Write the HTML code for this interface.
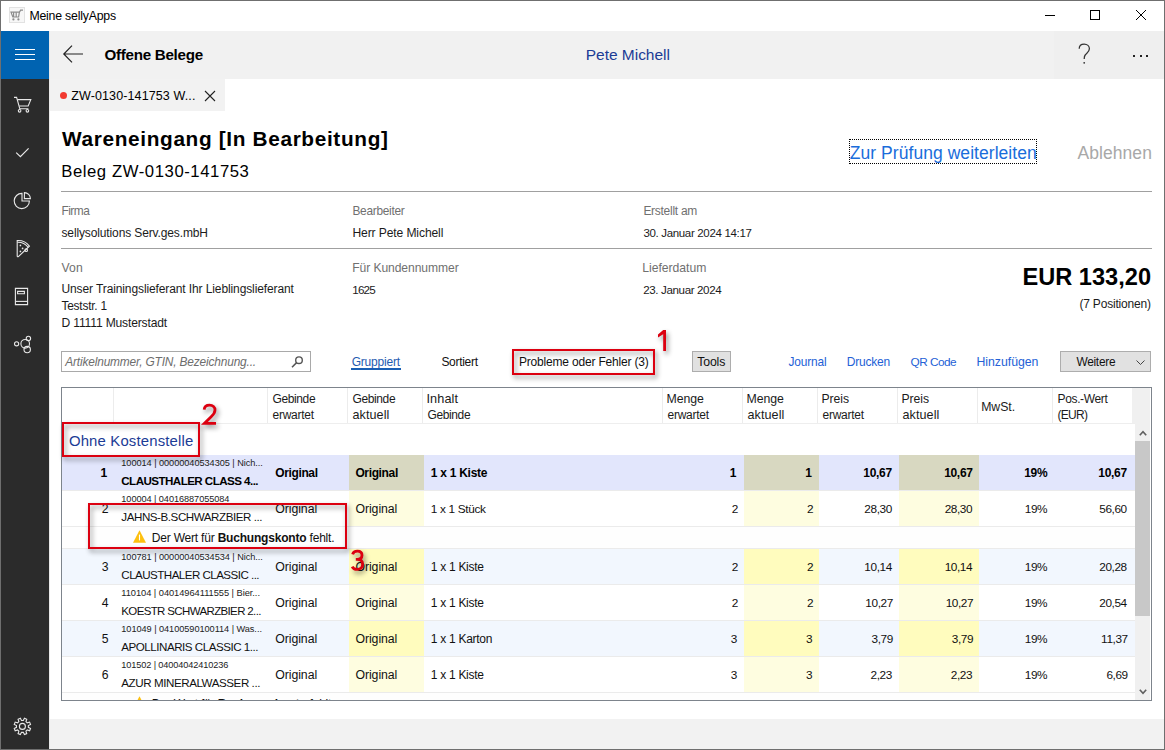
<!DOCTYPE html>
<html><head><meta charset="utf-8">
<style>
*{margin:0;padding:0;box-sizing:border-box}
html,body{width:1165px;height:750px;overflow:hidden;background:#fff}
body{position:relative;font-family:"Liberation Sans",sans-serif;color:#1b1b1b}
.a{position:absolute}
.t{position:absolute;white-space:nowrap;line-height:1}
svg{position:absolute;overflow:visible}
</style></head><body>
<!-- window border -->
<div class="a" style="left:0;top:0;width:1165px;height:750px;border:1px solid #6f6f6f"></div>
<!-- title bar icon -->
<div class="a" style="left:9px;top:7px;width:16px;height:16px;background:#f7f7f7;border:1px solid #e2e2e2"></div>
<svg style="left:9px;top:7px" width="16" height="16"><g fill="none" stroke="#8c8c8c" stroke-width="1.2"><path d="M2,5.2 H10.4 L9.6,10 H3.8 Z"/><path d="M10.4,5.2 L11.6,3.2 H14"/><path d="M4.6,5.2 V10 M7.2,5.2 V10"/></g><g fill="#8c8c8c"><circle cx="4.4" cy="12.4" r="1.1"/><circle cx="9.4" cy="12.4" r="1.1"/></g></svg>
<div class="a" style="left:1045px;top:15px;width:10px;height:1px;background:#000"></div>
<div class="a" style="left:1090px;top:10px;width:10px;height:10px;border:1px solid #000"></div>
<svg style="left:1136px;top:10px" width="10" height="10"><path d="M0,0 L10,10 M10,0 L0,10" stroke="#000" stroke-width="1"/></svg>
<!-- sidebar -->
<div class="a" style="left:1px;top:31px;width:48px;height:718px;background:#2b2b2b"></div>
<div class="a" style="left:1px;top:31px;width:48px;height:48px;background:#0063b1"></div>
<div class="a" style="left:15px;top:49px;width:20px;height:1px;background:#fff"></div>
<div class="a" style="left:15px;top:54px;width:20px;height:1px;background:#fff"></div>
<div class="a" style="left:15px;top:59px;width:20px;height:1px;background:#fff"></div>
<div class="a" style="left:49px;top:31px;width:1px;height:718px;background:#e8e8e8"></div>
<svg style="left:8px;top:90px" width="30" height="30"><g fill="none" stroke="#e8e8e8" stroke-width="1.1"><path d="M6,7.4 H8.6 L11.8,18.8 H20.4"/><path d="M9.4,9.6 H22.8 L20.2,16 H11.2"/><circle cx="11.6" cy="20.8" r="1.3"/><circle cx="19.4" cy="20.8" r="1.3"/></g></svg>
<svg style="left:8px;top:138px" width="30" height="30"><path d="M8.2,14.6 L12.4,18.6 L20.6,10.4" fill="none" stroke="#e8e8e8" stroke-width="1.2"/></svg>
<svg style="left:8px;top:186px" width="30" height="30"><g fill="none" stroke="#e8e8e8" stroke-width="1.1"><path d="M14,7.4 A7.6,7.6 0 1 0 21.4,15 H14 Z"/><path d="M16.4,6.6 V12.6 H22.4 A6,6 0 0 0 16.4,6.6 Z"/></g></svg>
<svg style="left:8px;top:234px" width="30" height="30"><g fill="none" stroke="#e8e8e8" stroke-width="1.1"><path d="M9.2,6.6 C14,6.2 18.4,8.4 21.4,12.2 L10.4,22.6 C9.8,23 9.2,22.6 9.2,22 Z"/><path d="M9.4,8.2 C13.6,8 17.6,10 20.2,13.4"/><circle cx="18.2" cy="16.2" r="1.3"/></g><g fill="#e8e8e8"><circle cx="12.4" cy="11.4" r="0.85"/><circle cx="14.6" cy="14.4" r="0.85"/><circle cx="12.4" cy="17.4" r="0.85"/></g></svg>
<svg style="left:8px;top:282px" width="30" height="30"><g fill="none" stroke="#e8e8e8" stroke-width="1.1"><path d="M7.4,6.4 H19.6 V22.6 H7.4 Z"/><path d="M7.4,19.4 H19.6"/><path d="M9.6,9.4 H16.4 V11.8 H9.6 Z"/></g></svg>
<svg style="left:8px;top:330px" width="30" height="30"><g fill="none" stroke="#e8e8e8" stroke-width="1.1"><circle cx="8.6" cy="13.8" r="2.1"/><circle cx="17.2" cy="13.8" r="4.3"/><circle cx="20.4" cy="8.4" r="2.2"/><circle cx="19.2" cy="19.6" r="3.2"/></g></svg>
<svg style="left:8px;top:711px" width="30" height="30"><g fill="none" stroke="#e8e8e8" stroke-width="1.1"><path d="M22.55,17.43 L21.60,19.73 L19.23,18.96 L17.96,20.23 L18.73,22.60 L16.43,23.55 L15.29,21.33 L13.51,21.33 L12.37,23.55 L10.07,22.60 L10.84,20.23 L9.57,18.96 L7.20,19.73 L6.25,17.43 L8.47,16.29 L8.47,14.51 L6.25,13.37 L7.20,11.07 L9.57,11.84 L10.84,10.57 L10.07,8.20 L12.37,7.25 L13.51,9.47 L15.29,9.47 L16.43,7.25 L18.73,8.20 L17.96,10.57 L19.23,11.84 L21.60,11.07 L22.55,13.37 L20.33,14.51 L20.33,16.29 Z"/><circle cx="14.4" cy="15.4" r="3"/></g></svg>
<!-- app header -->
<div class="a" style="left:50px;top:31px;width:1114px;height:48px;background:#f1f1f1"></div>
<div class="a" style="left:1054px;top:31px;width:110px;height:48px;background:#efefef"></div>
<svg style="left:63px;top:45px" width="20" height="18"><path d="M9,0.6 L0.8,9 L9,17.4 M0.8,9 H20" fill="none" stroke="#222" stroke-width="1.2"/></svg>
<svg style="left:1078px;top:43px" width="13" height="21"><path d="M1.2,5.8 C1.2,2.8 3.4,1 6.2,1 C9.2,1 11.4,3 11.4,5.8 C11.4,8.8 8.6,10.2 7.2,12 C6.4,13 6.2,14 6.2,16" fill="none" stroke="#333" stroke-width="1.25"/><circle cx="6.2" cy="19.8" r="0.9" fill="#333"/></svg>
<div class="a" style="left:1133px;top:55px;width:2px;height:2px;background:#222"></div>
<div class="a" style="left:1140px;top:55px;width:2px;height:2px;background:#222"></div>
<div class="a" style="left:1146px;top:55px;width:2px;height:2px;background:#222"></div>
<!-- tab -->
<div class="a" style="left:50px;top:79px;width:175px;height:32px;background:#f2f2f2"></div>
<div class="a" style="left:60px;top:92px;width:7px;height:7px;border-radius:50%;background:#f23a30"></div>
<svg style="left:205px;top:91px" width="10" height="10"><path d="M0,0 L10,10 M10,0 L0,10" stroke="#222" stroke-width="1.1"/></svg>
<!-- main -->
<div class="a" style="left:849px;top:139px;width:188px;height:25px;border:1px dotted #000"></div>
<div class="a" style="left:61px;top:191px;width:1091px;height:1px;background:#a0a0a0"></div>
<div class="a" style="left:61px;top:248px;width:1091px;height:1px;background:#a0a0a0"></div>
<!-- toolbar -->
<div class="a" style="left:61px;top:351px;width:250px;height:21px;border:1px solid #a9a9a9;background:#fff"></div>
<svg style="left:291px;top:356px" width="13" height="12"><circle cx="8" cy="4.2" r="3.3" fill="none" stroke="#555" stroke-width="1.4"/><path d="M5.6,6.6 L1,11.2" stroke="#555" stroke-width="1.5"/></svg>
<div class="a" style="left:351px;top:368px;width:50px;height:2px;background:#1a5fb4"></div>
<div class="a" style="left:692px;top:351px;width:39px;height:21px;border:1px solid #adadad;background:#e1e1e1"></div>
<div class="a" style="left:1060px;top:351px;width:91px;height:21px;border:1px solid #adadad;background:#e1e1e1"></div>
<svg style="left:1136px;top:359.5px" width="9" height="6"><path d="M0.5,0.5 L4.5,4.5 L8.5,0.5" fill="none" stroke="#444" stroke-width="1"/></svg>
<!-- bottom bar -->
<div class="a" style="left:50px;top:719px;width:1114px;height:30px;background:#f2f2f2"></div>

<div class="a" style="left:113px;top:388px;width:1px;height:35px;background:#ececec"></div>
<div class="a" style="left:267px;top:388px;width:1px;height:35px;background:#ececec"></div>
<div class="a" style="left:347px;top:388px;width:1px;height:35px;background:#ececec"></div>
<div class="a" style="left:422px;top:388px;width:1px;height:35px;background:#ececec"></div>
<div class="a" style="left:662px;top:388px;width:1px;height:35px;background:#ececec"></div>
<div class="a" style="left:742px;top:388px;width:1px;height:35px;background:#ececec"></div>
<div class="a" style="left:817px;top:388px;width:1px;height:35px;background:#ececec"></div>
<div class="a" style="left:897px;top:388px;width:1px;height:35px;background:#ececec"></div>
<div class="a" style="left:977px;top:388px;width:1px;height:35px;background:#ececec"></div>
<div class="a" style="left:1052px;top:388px;width:1px;height:35px;background:#ececec"></div>
<div class="a" style="left:1132px;top:388px;width:18px;height:35px;background:#f0f0f0"></div>
<div class="a" style="left:62px;top:423px;width:1073px;height:1px;background:#eeeeee"></div>
<div class="a" style="left:62px;top:455px;width:1073px;height:35px;background:#e2e6fc"></div>
<div class="a" style="left:349px;top:455px;width:75px;height:35px;background:#d8d8c1"></div>
<div class="a" style="left:744px;top:455px;width:75px;height:35px;background:#d8d8c1"></div>
<div class="a" style="left:899px;top:455px;width:80px;height:35px;background:#d8d8c1"></div>
<div class="a" style="left:62px;top:490px;width:1073px;height:1px;background:#ebebeb"></div>
<div class="a" style="left:62px;top:491px;width:1073px;height:35px;background:#ffffff"></div>
<div class="a" style="left:349px;top:491px;width:75px;height:35px;background:#fefde0"></div>
<div class="a" style="left:744px;top:491px;width:75px;height:35px;background:#fefde0"></div>
<div class="a" style="left:899px;top:491px;width:80px;height:35px;background:#fefde0"></div>
<div class="a" style="left:62px;top:526px;width:1073px;height:1px;background:#ebebeb"></div>
<div class="a" style="left:62px;top:549px;width:1073px;height:35px;background:#f2f7fe"></div>
<div class="a" style="left:349px;top:549px;width:75px;height:35px;background:#fffcbe"></div>
<div class="a" style="left:744px;top:549px;width:75px;height:35px;background:#fffcbe"></div>
<div class="a" style="left:899px;top:549px;width:80px;height:35px;background:#fffcbe"></div>
<div class="a" style="left:62px;top:584px;width:1073px;height:1px;background:#ebebeb"></div>
<div class="a" style="left:62px;top:585px;width:1073px;height:35px;background:#ffffff"></div>
<div class="a" style="left:349px;top:585px;width:75px;height:35px;background:#fefde0"></div>
<div class="a" style="left:744px;top:585px;width:75px;height:35px;background:#fefde0"></div>
<div class="a" style="left:899px;top:585px;width:80px;height:35px;background:#fefde0"></div>
<div class="a" style="left:62px;top:620px;width:1073px;height:1px;background:#ebebeb"></div>
<div class="a" style="left:62px;top:621px;width:1073px;height:35px;background:#f2f7fe"></div>
<div class="a" style="left:349px;top:621px;width:75px;height:35px;background:#fffcbe"></div>
<div class="a" style="left:744px;top:621px;width:75px;height:35px;background:#fffcbe"></div>
<div class="a" style="left:899px;top:621px;width:80px;height:35px;background:#fffcbe"></div>
<div class="a" style="left:62px;top:656px;width:1073px;height:1px;background:#ebebeb"></div>
<div class="a" style="left:62px;top:657px;width:1073px;height:35px;background:#ffffff"></div>
<div class="a" style="left:349px;top:657px;width:75px;height:35px;background:#fefde0"></div>
<div class="a" style="left:744px;top:657px;width:75px;height:35px;background:#fefde0"></div>
<div class="a" style="left:899px;top:657px;width:80px;height:35px;background:#fefde0"></div>
<div class="a" style="left:62px;top:692px;width:1073px;height:1px;background:#ebebeb"></div>
<div class="a" style="left:62px;top:527px;width:1073px;height:21px;background:#fefefe"></div>
<div class="a" style="left:62px;top:548px;width:1073px;height:1px;background:#ebebeb"></div>
<svg style="left:133px;top:530px" width="13" height="13"><path d="M6.5,0.2 L13,12.8 H0 Z" fill="#fdc010"/><path d="M6.5,4.6 V10.4" stroke="#fff" stroke-width="1.1"/></svg>
<div class="a" style="left:62px;top:693px;width:1073px;height:21px;background:#fefefe"></div>
<div class="a" style="left:62px;top:714px;width:1073px;height:1px;background:#ebebeb"></div>
<svg style="left:133px;top:696px" width="13" height="13"><path d="M6.5,0.2 L13,12.8 H0 Z" fill="#fdc010"/><path d="M6.5,4.6 V10.4" stroke="#fff" stroke-width="1.1"/></svg>

<div class="a" style="left:0;top:0;width:1165px;height:700px;overflow:hidden">
<div class="t" style="left:29.40px;top:10.0px;font-size:12.3px;letter-spacing:-0.2px;color:#000;">Meine sellyApps</div>
<div class="t" style="left:104.40px;top:47.3px;font-size:15.2px;font-weight:700;letter-spacing:-0.28px;color:#000;">Offene Belege</div>
<div class="t" style="left:585.80px;top:47.3px;font-size:15.5px;letter-spacing:-0.03px;color:#1c3c96;">Pete Michell</div>
<div class="t" style="left:71.20px;top:89.8px;font-size:12.5px;letter-spacing:0.12px;color:#000;">ZW-0130-141753 W...</div>
<div class="t" style="left:62.00px;top:129.0px;font-size:20.8px;font-weight:700;letter-spacing:0.65px;color:#000;">Wareneingang [In Bearbeitung]</div>
<div class="t" style="left:61.20px;top:163.5px;font-size:16.7px;letter-spacing:0.57px;color:#000;">Beleg ZW-0130-141753</div>
<div class="t" style="left:849.80px;top:145.0px;font-size:17.5px;letter-spacing:0.05px;color:#1a6ddb;">Zur Prüfung weiterleiten</div>
<div class="t" style="left:1077.40px;top:145.0px;font-size:17.5px;letter-spacing:0.08px;color:#a8a8a8;">Ablehnen</div>
<div class="t" style="left:61.50px;top:206.0px;font-size:11.9px;letter-spacing:-0.52px;color:#707070;">Firma</div>
<div class="t" style="left:61.50px;top:226.5px;font-size:12.0px;letter-spacing:-0.13px;color:#1b1b1b;">sellysolutions Serv.ges.mbH</div>
<div class="t" style="left:352.40px;top:206.0px;font-size:11.9px;letter-spacing:-0.27px;color:#707070;">Bearbeiter</div>
<div class="t" style="left:352.40px;top:226.5px;font-size:12.1px;letter-spacing:-0.11px;color:#1b1b1b;">Herr Pete Michell</div>
<div class="t" style="left:643.40px;top:205.0px;font-size:12.0px;letter-spacing:-0.28px;color:#707070;">Erstellt am</div>
<div class="t" style="left:643.40px;top:227.5px;font-size:11.5px;letter-spacing:-0.33px;color:#1b1b1b;">30. Januar 2024 14:17</div>
<div class="t" style="left:61.50px;top:262.0px;font-size:12.2px;letter-spacing:0.13px;color:#707070;">Von</div>
<div class="t" style="left:61.50px;top:283.0px;font-size:12.0px;letter-spacing:-0.11px;color:#1b1b1b;">Unser Trainingslieferant Ihr Lieblingslieferant</div>
<div class="t" style="left:61.50px;top:301.0px;font-size:11.9px;letter-spacing:-0.22px;color:#1b1b1b;">Teststr. 1</div>
<div class="t" style="left:61.50px;top:317.0px;font-size:12.1px;letter-spacing:-0.17px;color:#1b1b1b;">D 11111 Musterstadt</div>
<div class="t" style="left:352.20px;top:262.0px;font-size:12.1px;letter-spacing:-0.07px;color:#707070;">Für Kundennummer</div>
<div class="t" style="left:352.20px;top:283.5px;font-size:11.7px;letter-spacing:-0.8px;color:#1b1b1b;">1625</div>
<div class="t" style="left:642.20px;top:262.0px;font-size:12.2px;letter-spacing:-0.02px;color:#707070;">Lieferdatum</div>
<div class="t" style="left:643.20px;top:283.5px;font-size:11.6px;letter-spacing:-0.38px;color:#1b1b1b;">23. Januar 2024</div>
<div class="t" style="left:1022.49px;top:266.0px;font-size:23.6px;font-weight:700;color:#000;">EUR 133,20</div>
<div class="t" style="left:1079.46px;top:298.0px;font-size:12.0px;letter-spacing:-0.2px;color:#1b1b1b;">(7 Positionen)</div>
<div class="t" style="left:65.30px;top:357.0px;font-size:11.9px;font-style:italic;letter-spacing:-0.16px;color:#6d6d6d;">Artikelnummer, GTIN, Bezeichnung...</div>
<div class="t" style="left:351.70px;top:355.5px;font-size:12.0px;letter-spacing:-0.21px;color:#1f5cb0;">Gruppiert</div>
<div class="t" style="left:441.40px;top:355.5px;font-size:12.0px;letter-spacing:-0.29px;color:#111;">Sortiert</div>
<div class="t" style="left:519.00px;top:356.0px;font-size:12.0px;letter-spacing:-0.19px;color:#111;">Probleme oder Fehler (3)</div>
<div class="t" style="left:697.20px;top:356.0px;font-size:12.3px;letter-spacing:-0.14px;color:#111;">Tools</div>
<div class="t" style="left:788.50px;top:357.0px;font-size:11.9px;letter-spacing:-0.14px;color:#2361d6;">Journal</div>
<div class="t" style="left:846.80px;top:356.0px;font-size:12.0px;letter-spacing:-0.23px;color:#2361d6;">Drucken</div>
<div class="t" style="left:910.60px;top:357.0px;font-size:11.8px;letter-spacing:-0.54px;color:#2361d6;">QR Code</div>
<div class="t" style="left:976.50px;top:356.0px;font-size:12.3px;letter-spacing:-0.03px;color:#2361d6;">Hinzufügen</div>
<div class="t" style="left:1076.40px;top:357.0px;font-size:11.9px;letter-spacing:-0.27px;color:#111;">Weitere</div>
<div class="t" style="left:272.50px;top:393.0px;font-size:12.0px;letter-spacing:-0.38px;color:#1b1b1b;">Gebinde</div>
<div class="t" style="left:272.50px;top:408.5px;font-size:12.0px;letter-spacing:-0.26px;color:#1b1b1b;">erwartet</div>
<div class="t" style="left:352.50px;top:393.0px;font-size:12.0px;letter-spacing:-0.38px;color:#1b1b1b;">Gebinde</div>
<div class="t" style="left:352.50px;top:408.5px;font-size:12.6px;letter-spacing:0.07px;color:#1b1b1b;">aktuell</div>
<div class="t" style="left:426.50px;top:393.0px;font-size:12.7px;letter-spacing:0.1px;color:#1b1b1b;">Inhalt</div>
<div class="t" style="left:427.50px;top:408.5px;font-size:12.0px;letter-spacing:-0.38px;color:#1b1b1b;">Gebinde</div>
<div class="t" style="left:666.50px;top:393.0px;font-size:12.3px;letter-spacing:-0.07px;color:#1b1b1b;">Menge</div>
<div class="t" style="left:667.50px;top:408.5px;font-size:12.0px;letter-spacing:-0.26px;color:#1b1b1b;">erwartet</div>
<div class="t" style="left:746.50px;top:393.0px;font-size:12.3px;letter-spacing:-0.07px;color:#1b1b1b;">Menge</div>
<div class="t" style="left:747.50px;top:408.5px;font-size:12.6px;letter-spacing:0.07px;color:#1b1b1b;">aktuell</div>
<div class="t" style="left:821.50px;top:393.0px;font-size:12.2px;letter-spacing:-0.04px;color:#1b1b1b;">Preis</div>
<div class="t" style="left:822.50px;top:408.5px;font-size:12.0px;letter-spacing:-0.26px;color:#1b1b1b;">erwartet</div>
<div class="t" style="left:901.50px;top:393.0px;font-size:12.2px;letter-spacing:-0.04px;color:#1b1b1b;">Preis</div>
<div class="t" style="left:902.50px;top:408.5px;font-size:12.6px;letter-spacing:0.07px;color:#1b1b1b;">aktuell</div>
<div class="t" style="left:1057.50px;top:393.0px;font-size:12.0px;letter-spacing:-0.35px;color:#1b1b1b;">Pos.-Wert</div>
<div class="t" style="left:1057.50px;top:408.5px;font-size:12.0px;letter-spacing:-0.7px;color:#1b1b1b;">(EUR)</div>
<div class="t" style="left:981.20px;top:401.0px;font-size:12.3px;letter-spacing:-0.06px;color:#1b1b1b;">MwSt.</div>
<div class="t" style="left:68.90px;top:433.7px;font-size:14.9px;letter-spacing:0.17px;color:#1c3c96;">Ohne Kostenstelle</div>
<div class="t" style="left:100.40px;top:467.0px;font-size:12.2px;font-weight:700;color:#000;">1</div>
<div class="t" style="left:121.30px;top:459.0px;font-size:9.2px;letter-spacing:-0.05px;color:#222;">100014 | 00000040534305 | Nich...</div>
<div class="t" style="left:121.30px;top:475.0px;font-size:11.6px;font-weight:700;letter-spacing:-0.55px;color:#000;">CLAUSTHALER CLASS 4...</div>
<div class="t" style="left:275.20px;top:467.0px;font-size:12.0px;font-weight:700;letter-spacing:-0.36px;color:#000;">Original</div>
<div class="t" style="left:355.40px;top:467.0px;font-size:12.0px;font-weight:700;letter-spacing:-0.36px;color:#000;">Original</div>
<div class="t" style="left:430.80px;top:467.0px;font-size:12.0px;font-weight:700;letter-spacing:-0.27px;color:#000;">1 x 1 Kiste</div>
<div class="t" style="left:729.70px;top:467.0px;font-size:12.0px;font-weight:700;letter-spacing:-0.3px;color:#000;">1</div>
<div class="t" style="left:805.30px;top:467.0px;font-size:12.0px;font-weight:700;letter-spacing:-0.3px;color:#000;">1</div>
<div class="t" style="left:863.34px;top:467.0px;font-size:12.0px;font-weight:700;letter-spacing:-0.3px;color:#000;">10,67</div>
<div class="t" style="left:944.14px;top:467.0px;font-size:12.0px;font-weight:700;letter-spacing:-0.3px;color:#000;">10,67</div>
<div class="t" style="left:1024.25px;top:467.0px;font-size:12.0px;font-weight:700;letter-spacing:-0.3px;color:#000;">19%</div>
<div class="t" style="left:1098.34px;top:467.0px;font-size:12.0px;font-weight:700;letter-spacing:-0.3px;color:#000;">10,67</div>
<div class="t" style="left:101.80px;top:503.0px;font-size:12.2px;color:#111;">2</div>
<div class="t" style="left:121.30px;top:495.0px;font-size:9.2px;letter-spacing:-0.07px;color:#222;">100004 | 04016887055084</div>
<div class="t" style="left:121.30px;top:511.0px;font-size:11.6px;letter-spacing:-0.44px;color:#111;">JAHNS-B.SCHWARZBIER ...</div>
<div class="t" style="left:275.20px;top:503.0px;font-size:12.3px;letter-spacing:-0.06px;color:#111;">Original</div>
<div class="t" style="left:355.40px;top:503.0px;font-size:12.3px;letter-spacing:-0.06px;color:#111;">Original</div>
<div class="t" style="left:430.80px;top:504.0px;font-size:11.8px;letter-spacing:-0.32px;color:#111;">1 x 1 Stück</div>
<div class="t" style="left:731.80px;top:504.0px;font-size:11.8px;letter-spacing:-0.4px;color:#111;">2</div>
<div class="t" style="left:807.00px;top:504.0px;font-size:11.8px;letter-spacing:-0.4px;color:#111;">2</div>
<div class="t" style="left:864.34px;top:504.0px;font-size:11.8px;letter-spacing:-0.4px;color:#111;">28,30</div>
<div class="t" style="left:944.64px;top:504.0px;font-size:11.8px;letter-spacing:-0.4px;color:#111;">28,30</div>
<div class="t" style="left:1024.78px;top:504.0px;font-size:11.8px;letter-spacing:-0.4px;color:#111;">19%</div>
<div class="t" style="left:1099.24px;top:504.0px;font-size:11.8px;letter-spacing:-0.4px;color:#111;">56,60</div>
<div class="t" style="left:101.80px;top:561.0px;font-size:12.2px;color:#111;">3</div>
<div class="t" style="left:121.30px;top:553.0px;font-size:9.2px;letter-spacing:-0.05px;color:#222;">100781 | 00000040534534 | Nich...</div>
<div class="t" style="left:121.30px;top:569.0px;font-size:11.6px;letter-spacing:-0.54px;color:#111;">CLAUSTHALER CLASSIC ...</div>
<div class="t" style="left:275.20px;top:561.0px;font-size:12.3px;letter-spacing:-0.06px;color:#111;">Original</div>
<div class="t" style="left:355.40px;top:561.0px;font-size:12.3px;letter-spacing:-0.06px;color:#111;">Original</div>
<div class="t" style="left:430.80px;top:561.0px;font-size:12.0px;letter-spacing:-0.29px;color:#111;">1 x 1 Kiste</div>
<div class="t" style="left:731.80px;top:562.0px;font-size:11.8px;letter-spacing:-0.4px;color:#111;">2</div>
<div class="t" style="left:807.00px;top:562.0px;font-size:11.8px;letter-spacing:-0.4px;color:#111;">2</div>
<div class="t" style="left:864.34px;top:562.0px;font-size:11.8px;letter-spacing:-0.4px;color:#111;">10,14</div>
<div class="t" style="left:944.64px;top:562.0px;font-size:11.8px;letter-spacing:-0.4px;color:#111;">10,14</div>
<div class="t" style="left:1024.78px;top:562.0px;font-size:11.8px;letter-spacing:-0.4px;color:#111;">19%</div>
<div class="t" style="left:1099.24px;top:562.0px;font-size:11.8px;letter-spacing:-0.4px;color:#111;">20,28</div>
<div class="t" style="left:101.80px;top:597.0px;font-size:12.2px;color:#111;">4</div>
<div class="t" style="left:121.30px;top:589.0px;font-size:9.3px;letter-spacing:-0.05px;color:#222;">110104 | 04014964111555 | Bier...</div>
<div class="t" style="left:121.30px;top:606.0px;font-size:11.5px;letter-spacing:-0.64px;color:#111;">KOESTR SCHWARZBIER 2...</div>
<div class="t" style="left:275.20px;top:597.0px;font-size:12.3px;letter-spacing:-0.06px;color:#111;">Original</div>
<div class="t" style="left:355.40px;top:597.0px;font-size:12.3px;letter-spacing:-0.06px;color:#111;">Original</div>
<div class="t" style="left:430.80px;top:597.0px;font-size:12.0px;letter-spacing:-0.29px;color:#111;">1 x 1 Kiste</div>
<div class="t" style="left:731.80px;top:598.0px;font-size:11.8px;letter-spacing:-0.4px;color:#111;">2</div>
<div class="t" style="left:807.00px;top:598.0px;font-size:11.8px;letter-spacing:-0.4px;color:#111;">2</div>
<div class="t" style="left:865.34px;top:598.0px;font-size:11.8px;letter-spacing:-0.4px;color:#111;">10,27</div>
<div class="t" style="left:945.64px;top:598.0px;font-size:11.8px;letter-spacing:-0.4px;color:#111;">10,27</div>
<div class="t" style="left:1024.78px;top:598.0px;font-size:11.8px;letter-spacing:-0.4px;color:#111;">19%</div>
<div class="t" style="left:1099.24px;top:598.0px;font-size:11.8px;letter-spacing:-0.4px;color:#111;">20,54</div>
<div class="t" style="left:101.80px;top:633.0px;font-size:12.2px;color:#111;">5</div>
<div class="t" style="left:121.30px;top:625.0px;font-size:9.2px;letter-spacing:-0.05px;color:#222;">101049 | 04100590100114 | Was...</div>
<div class="t" style="left:121.30px;top:641.0px;font-size:11.6px;letter-spacing:-0.48px;color:#111;">APOLLINARIS CLASSIC 1...</div>
<div class="t" style="left:275.20px;top:633.0px;font-size:12.3px;letter-spacing:-0.06px;color:#111;">Original</div>
<div class="t" style="left:355.40px;top:633.0px;font-size:12.3px;letter-spacing:-0.06px;color:#111;">Original</div>
<div class="t" style="left:430.80px;top:633.0px;font-size:12.0px;letter-spacing:-0.28px;color:#111;">1 x 1 Karton</div>
<div class="t" style="left:730.80px;top:634.0px;font-size:11.8px;letter-spacing:-0.4px;color:#111;">3</div>
<div class="t" style="left:806.00px;top:634.0px;font-size:11.8px;letter-spacing:-0.4px;color:#111;">3</div>
<div class="t" style="left:871.50px;top:634.0px;font-size:11.8px;letter-spacing:-0.4px;color:#111;">3,79</div>
<div class="t" style="left:951.80px;top:634.0px;font-size:11.8px;letter-spacing:-0.4px;color:#111;">3,79</div>
<div class="t" style="left:1024.78px;top:634.0px;font-size:11.8px;letter-spacing:-0.4px;color:#111;">19%</div>
<div class="t" style="left:1101.12px;top:634.0px;font-size:11.8px;letter-spacing:-0.4px;color:#111;">11,37</div>
<div class="t" style="left:101.80px;top:669.0px;font-size:12.2px;color:#111;">6</div>
<div class="t" style="left:121.30px;top:661.0px;font-size:9.2px;letter-spacing:-0.12px;color:#222;">101502 | 04004042410236</div>
<div class="t" style="left:121.30px;top:677.0px;font-size:11.6px;letter-spacing:-0.43px;color:#111;">AZUR MINERALWASSER ...</div>
<div class="t" style="left:275.20px;top:669.0px;font-size:12.3px;letter-spacing:-0.06px;color:#111;">Original</div>
<div class="t" style="left:355.40px;top:669.0px;font-size:12.3px;letter-spacing:-0.06px;color:#111;">Original</div>
<div class="t" style="left:430.80px;top:669.0px;font-size:12.0px;letter-spacing:-0.29px;color:#111;">1 x 1 Kiste</div>
<div class="t" style="left:730.80px;top:670.0px;font-size:11.8px;letter-spacing:-0.4px;color:#111;">3</div>
<div class="t" style="left:806.00px;top:670.0px;font-size:11.8px;letter-spacing:-0.4px;color:#111;">3</div>
<div class="t" style="left:870.50px;top:670.0px;font-size:11.8px;letter-spacing:-0.4px;color:#111;">2,23</div>
<div class="t" style="left:950.80px;top:670.0px;font-size:11.8px;letter-spacing:-0.4px;color:#111;">2,23</div>
<div class="t" style="left:1024.78px;top:670.0px;font-size:11.8px;letter-spacing:-0.4px;color:#111;">19%</div>
<div class="t" style="left:1106.40px;top:670.0px;font-size:11.8px;letter-spacing:-0.4px;color:#111;">6,69</div>
<div class="t" style="left:151.80px;top:532.0px;font-size:12.0px;letter-spacing:-0.2px;color:#111;">Der Wert für <b>Buchungskonto</b> fehlt.</div>
<div class="t" style="left:151.80px;top:698.0px;font-size:12.0px;letter-spacing:-0.2px;color:#111;">Der Wert für <b>Buchungskonto</b> fehlt.</div>
</div>
<div class="a" style="left:62px;top:700px;width:1090px;height:19px;background:#ffffff"></div>
<div class="a" style="left:61px;top:387px;width:1091px;height:314px;border:1px solid #7d848c"></div>
<div class="a" style="left:1135px;top:423px;width:15px;height:277px;background:#f0f0f0"></div>
<div class="a" style="left:1135px;top:441px;width:15px;height:175px;background:#c8c8c8"></div>
<svg style="left:1138.5px;top:430px" width="8" height="6"><path d="M0.8,5.2 L4,1.6 L7.2,5.2" fill="none" stroke="#606060" stroke-width="1.6"/></svg>
<svg style="left:1138.5px;top:689px" width="8" height="6"><path d="M0.8,0.8 L4,4.4 L7.2,0.8" fill="none" stroke="#606060" stroke-width="1.6"/></svg>

<div class="a" style="left:512px;top:349px;width:143px;height:26px;border:2px solid #dc0010;filter:drop-shadow(2px 3px 2.5px rgba(0,0,0,0.45))"></div>
<div class="a" style="left:62px;top:422px;width:138px;height:35px;border:2px solid #dc0010;filter:drop-shadow(2px 3px 2.5px rgba(0,0,0,0.45))"></div>
<div class="a" style="left:88px;top:503px;width:259px;height:46px;border:2px solid #dc0010;filter:drop-shadow(2px 3px 2.5px rgba(0,0,0,0.45))"></div>
<svg style="left:655px;top:328px;filter:drop-shadow(2px 3px 2.5px rgba(0,0,0,0.45))" width="14" height="25"><path d="M8.2,2 H11 V23 H8.2 V6.2 L3,9.6 V6.6 Z" fill="#dc0010"/></svg>
<svg style="left:202px;top:403px;filter:drop-shadow(2px 3px 2.5px rgba(0,0,0,0.45))" width="16" height="23"><path d="M2.2,6.6 C2.4,3.6 4.8,2.2 7.6,2.2 C10.8,2.2 13,4.2 13,7.1 C13,9.7 11.6,11.5 9.4,13.5 L2.4,20.4 H14" fill="none" stroke="#dc0010" stroke-width="2.8" stroke-linejoin="miter"/></svg>
<svg style="left:350px;top:549px;filter:drop-shadow(2px 3px 2.5px rgba(0,0,0,0.45))" width="16" height="23"><path d="M2.6,5.4 C3.2,3.3 5,2.2 7.4,2.2 C10.2,2.2 12,3.9 12,6.3 C12,8.8 10,10.4 7,10.4 H5.8 M7,10.4 C10.6,10.4 12.6,12.4 12.6,15.2 C12.6,18.4 10.2,20.4 7.2,20.4 C4.8,20.4 3,19.4 2.2,17.6" fill="none" stroke="#dc0010" stroke-width="2.8"/></svg>

</body></html>
